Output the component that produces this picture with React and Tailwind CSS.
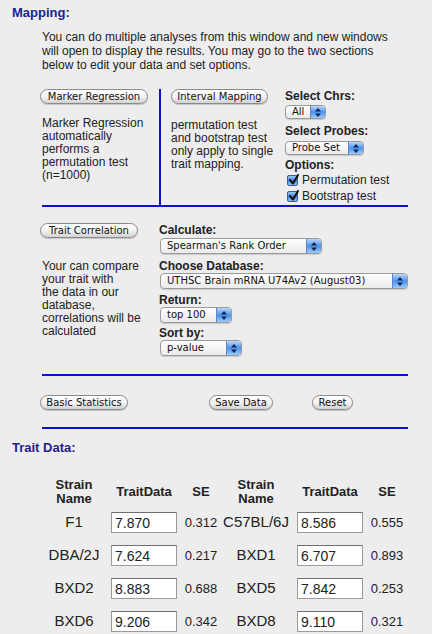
import React from 'react';

// ── Aqua-style controls ──

const Btn = ({ className = '', children }) => (
  <button
    type="button"
    className={`flex h-[15px] shrink-0 items-center justify-center rounded-full border border-[#8a8a8a] bg-gradient-to-b from-white via-[#f3f3f3] to-[#d2d2d2] font-['DejaVu_Sans',sans-serif] text-[10px] leading-none text-[#111] shadow-[0_1px_1px_rgba(0,0,0,0.18)] ${className}`}
  >
    {children}
  </button>
);

const Arrows = () => (
  <svg width="6" height="9" viewBox="0 0 6 9">
    <path d="M3 0 L6 3.5 L0 3.5 Z M0 5.5 L6 5.5 L3 9 Z" fill="#142452" />
  </svg>
);

const Select = ({ className = '', children }) => (
  <div
    className={`flex overflow-hidden rounded-[4px] border border-[#9a9a9a] bg-gradient-to-b from-white to-[#ebebeb] shadow-[0_1px_1px_rgba(0,0,0,0.15)] ${className}`}
  >
    <span className="flex flex-1 items-center whitespace-nowrap pl-[6px] font-['DejaVu_Sans',sans-serif] text-[10px] leading-none text-[#111]">
      {children}
    </span>
    <span className="flex w-[15px] items-center justify-center border-l border-[#5f86c2] bg-gradient-to-b from-[#b9d8fa] via-[#4b92ec] to-[#9ccaf7]">
      <Arrows />
    </span>
  </div>
);

const Check = ({ label }) => (
  <div className="flex h-[16px] items-center">
    <span className="relative ml-[2px] h-[11px] w-[11px] rounded-[2px] border border-[#3b5d9c] bg-gradient-to-b from-[#9cc6f4] via-[#3f86e4] to-[#8bbcf2]">
      <svg className="absolute -top-[2px] left-[1px]" width="10" height="11" viewBox="0 0 10 11">
        <path d="M1 6 L4 9.5 L9 1" fill="none" stroke="#111" strokeWidth="2" strokeLinecap="round" strokeLinejoin="round" />
      </svg>
    </span>
    <span className="ml-[4px] text-[12px] leading-[14px]">{label}</span>
  </div>
);

const Label = ({ className = '', children }) => (
  <p className={`text-[12px] font-bold leading-[14px] ${className}`}>{children}</p>
);

// ── Trait data ──

const rows = [
  ['F1', '7.870', '0.312', 'C57BL/6J', '8.586', '0.555'],
  ['DBA/2J', '7.624', '0.217', 'BXD1', '6.707', '0.893'],
  ['BXD2', '8.883', '0.688', 'BXD5', '7.842', '0.253'],
  ['BXD6', '9.206', '0.342', 'BXD8', '9.110', '0.321'],
];

const DataInput = ({ value }) => (
  <input
    readOnly
    value={value}
    className="h-[21px] w-[66px] border border-[#9a9a9a] border-t-[#6f6f6f] bg-white pl-[3px] pt-[2px] text-[14px] text-[#222] outline-none"
  />
);

export default function App() {
  return (
    <div className="min-h-screen overflow-hidden bg-[#ededed] font-['Liberation_Sans',Arial,sans-serif] text-[#222]">
      <h2 className="pl-3 pt-[5px] text-[13px] font-bold leading-4 text-[#1e1e8e]">Mapping:</h2>

      <p className="ml-[42px] mt-[9px] text-[12px] leading-[14px]">
        You can do multiple analyses from this window and new windows
        <br />
        will open to display the results. You may go to the two sections
        <br />
        below to edit your data and set options.
      </p>

      {/* Mapping tools */}
      <div className="ml-[42px] mt-[17px] flex w-[366px] border-b-2 border-[#1111cc]">
        <div className="w-[117px] shrink-0">
          <Btn className="-ml-[2px] w-[108px]">Marker Regression</Btn>
          <p className="mt-[13px] text-[12px] leading-[13px]">
            Marker Regression
            <br />
            automatically
            <br />
            performs a
            <br />
            permutation test
            <br />
            (n=1000)
          </p>
        </div>
        <div className="w-[126px] shrink-0 border-l-2 border-[#1111cc] pl-[10px]">
          <Btn className="w-[97px]">Interval Mapping</Btn>
          <p className="mt-[15px] text-[12px] leading-[13px]">
            permutation test
            <br />
            and bootstrap test
            <br />
            only apply to single
            <br />
            trait mapping.
          </p>
        </div>
        <div className="flex-1 pb-[1px]">
          <Label>Select Chrs:</Label>
          <Select className="mt-[2px] h-[14px] w-[41px]">All</Select>
          <Label className="mt-[5px]">Select Probes:</Label>
          <Select className="mt-[3px] h-[14px] w-[79px]">Probe Set</Select>
          <Label className="mt-[3px]">Options:</Label>
          <Check label="Permutation test" />
          <Check label="Bootstrap test" />
        </div>
      </div>

      {/* Correlation */}
      <div className="ml-[42px] flex w-[366px] border-b-2 border-[#1111cc] pb-[18px] pt-[16px]">
        <div className="w-[117px] shrink-0">
          <Btn className="-ml-[2px] w-[98px]">Trait Correlation</Btn>
          <p className="mt-[22px] text-[12px] leading-[13px]">
            Your can compare
            <br />
            your trait with
            <br />
            the data in our
            <br />
            database,
            <br />
            correlations will be
            <br />
            calculated
          </p>
        </div>
        <div className="flex-1">
          <Label>Calculate:</Label>
          <Select className="ml-px mt-px h-[16px] w-[162px]">Spearman's Rank Order</Select>
          <Label className="mt-[5px]">Choose Database:</Label>
          <Select className="ml-px h-[16px] w-[248px]">UTHSC Brain mRNA U74Av2 (August03)</Select>
          <Label className="mt-[4px]">Return:</Label>
          <Select className="ml-px h-[16px] w-[72px]">top 100</Select>
          <Label className="mt-[3px]">Sort by:</Label>
          <Select className="ml-px h-[16px] w-[82px]">p-value</Select>
        </div>
      </div>

      {/* Actions */}
      <div className="ml-[42px] flex w-[366px] border-b-2 border-[#1111cc] pb-[17px] pt-[19px]">
        <Btn className="-ml-[2px] w-[88px]">Basic Statistics</Btn>
        <Btn className="ml-[81px] w-[64px]">Save Data</Btn>
        <Btn className="ml-[39px] w-[41px]">Reset</Btn>
      </div>

      <h2 className="mt-[11px] pl-3 text-[13px] font-bold leading-4 text-[#1e1e8e]">Trait Data:</h2>

      <div className="ml-[42px] mt-[22px] grid grid-cols-[64px_76px_38px_72px_76px_38px] items-center text-center">
        {['Strain|Name', 'TraitData', 'SE', 'Strain|Name', 'TraitData', 'SE'].map((h, i) => (
          <div key={i} className="flex h-[28px] flex-col items-center justify-center text-[13px] font-bold leading-[14px]">
            {h.split('|').map((part) => (
              <span key={part}>{part}</span>
            ))}
          </div>
        ))}
        {rows.map((r) => (
          <React.Fragment key={r[0]}>
            <div className="flex h-[33px] items-center justify-center whitespace-nowrap text-[15px]">{r[0]}</div>
            <div className="flex justify-center"><DataInput value={r[1]} /></div>
            <div className="text-[13px]">{r[2]}</div>
            <div className="flex h-[33px] items-center justify-center whitespace-nowrap text-[15px]">{r[3]}</div>
            <div className="flex justify-center"><DataInput value={r[4]} /></div>
            <div className="text-[13px]">{r[5]}</div>
          </React.Fragment>
        ))}
      </div>
    </div>
  );
}
